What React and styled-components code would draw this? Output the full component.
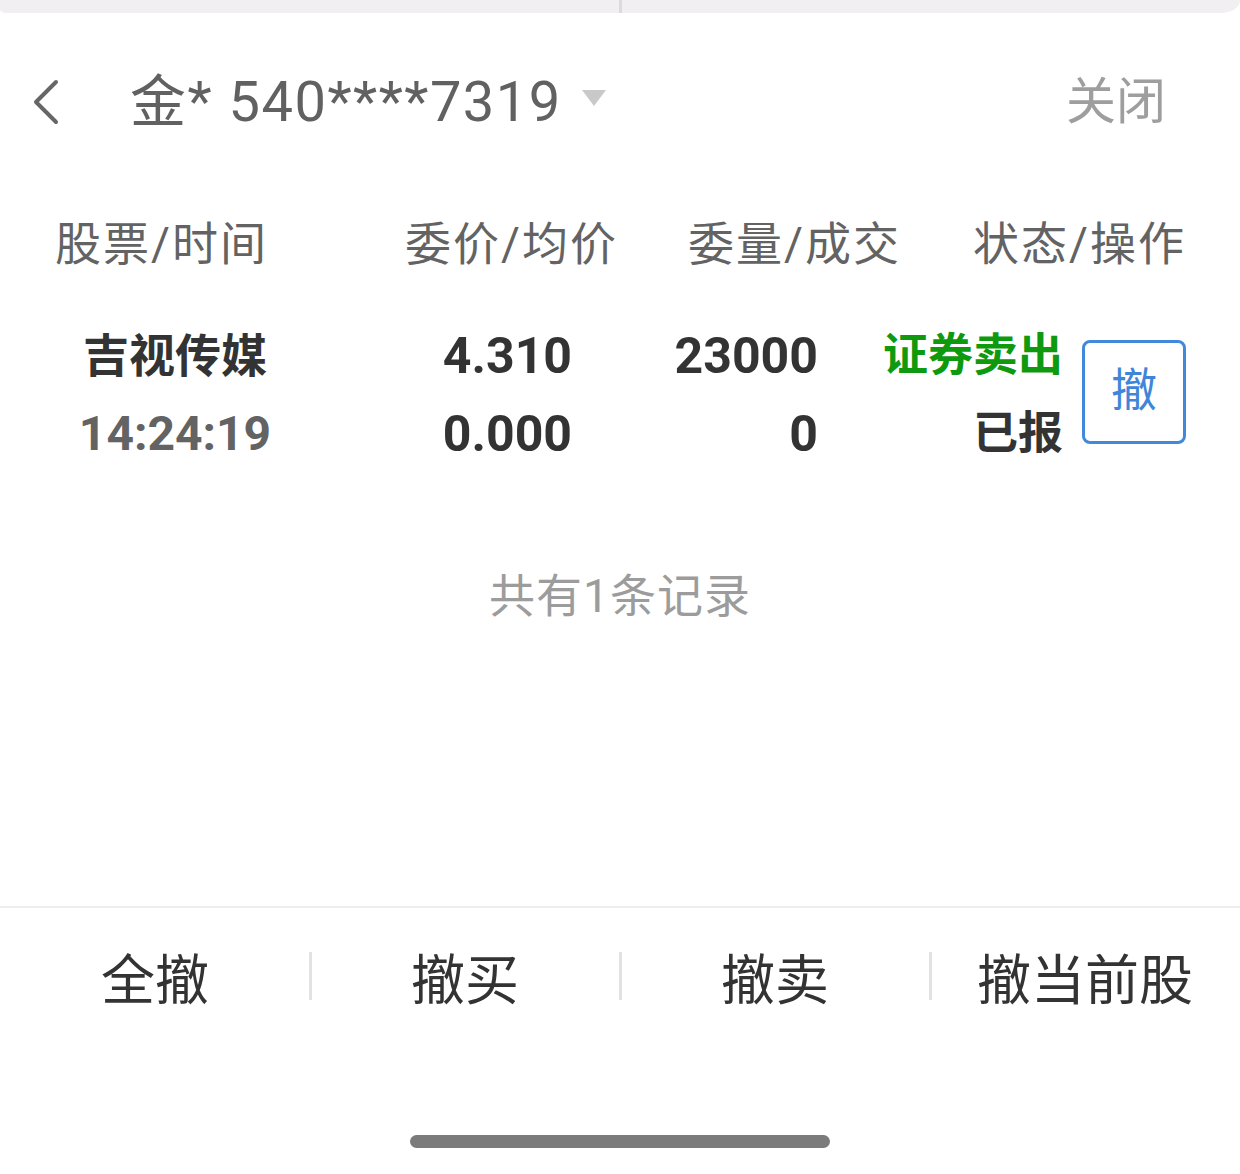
import React from "react";
import styled, { createGlobalStyle } from "styled-components";

const GlobalStyle = createGlobalStyle`
  html, body {
    margin: 0;
    padding: 0;
    background: #ffffff;
  }
  body {
    font-family: Roboto, "Noto Sans CJK SC", sans-serif;
  }
`;

const FONT = `Roboto, "Noto Sans CJK SC", sans-serif`;

const StyledPage = styled.div`
  width: 1240px;
  height: 1174px;
  display: flex;
  flex-direction: column;
  background: #ffffff;
  overflow: hidden;
  font-family: ${FONT};
`;

const StyledTopStrip = styled.div`
  height: 13px;
  flex-shrink: 0;
  display: flex;
  background: #f1eff1;
  border-bottom-right-radius: 20px 12px;
  border-bottom-left-radius: 6px 4px;
`;

const StyledStripHalf = styled.div`
  flex: 1;
`;

const StyledStripDivider = styled.div`
  width: 3px;
  background: #dcdadc;
`;

const StyledHeader = styled.div`
  height: 178px;
  flex-shrink: 0;
  display: flex;
  align-items: center;
  padding: 0 74px 0 32px;
`;

const StyledBack = styled.svg`
  width: 28px;
  height: 46px;
  margin-right: 70px;
  flex-shrink: 0;
`;

const StyledTitle = styled.span`
  color: #616161;
  font-size: 56px;
  font-weight: 400;
  line-height: 60px;
  letter-spacing: 1.5px;
`;

const StyledCaret = styled.svg`
  width: 24px;
  height: 16px;
  margin-left: 20px;
  margin-top: -8px;
`;

const StyledClose = styled.span`
  margin-left: auto;
  color: #9e9e9e;
  font-size: 50px;
  line-height: 60px;
`;

const StyledColumnHeader = styled.div`
  height: 106px;
  flex-shrink: 0;
  display: grid;
  grid-template-columns: 350px 283px 285px 1fr;
  align-items: center;
  padding-left: 55px;
`;

const StyledHeadCell = styled.span`
  color: #636363;
  font-size: 46px;
  line-height: 56px;
  letter-spacing: 2px;
  white-space: nowrap;
`;

const StyledOrderRow = styled.div`
  margin-top: 20px;
  display: grid;
  grid-template-columns: 350px 222px 246px 245px 1fr;
  grid-template-rows: 78px 78px;
  align-items: center;
  padding-right: 54px;
`;

const StyledCell = styled.span`
  text-align: ${(p) => p.$align || "right"};
  color: ${(p) => p.$color || "#333333"};
  font-size: ${(p) => p.$size || 50}px;
  font-weight: 700;
  line-height: 60px;
  white-space: nowrap;
`;

const StyledCancelButton = styled.button`
  grid-column: 5;
  grid-row: 1 / span 2;
  justify-self: end;
  align-self: center;
  margin: 0 0 6px 0;
  width: 104px;
  height: 104px;
  box-sizing: border-box;
  border: 3px solid #4389db;
  border-radius: 8px;
  background: #ffffff;
  color: #3f85d9;
  font-family: ${FONT};
  font-size: 46px;
  line-height: 1;
  padding: 0 0 4px;
  display: flex;
  align-items: center;
  justify-content: center;
`;

const StyledSummary = styled.div`
  margin-top: 83px;
  text-align: center;
  color: #9c9c9c;
  font-size: 46px;
  line-height: 80px;
  letter-spacing: 1px;
`;

const StyledSpacer = styled.div`
  flex: 1;
`;

const StyledDivider = styled.div`
  height: 2px;
  flex-shrink: 0;
  background: #eeeeee;
`;

const StyledBottomBar = styled.div`
  height: 144px;
  flex-shrink: 0;
  display: grid;
  grid-template-columns: repeat(4, 1fr);
  align-items: center;
`;

const StyledAction = styled.span`
  position: relative;
  text-align: center;
  color: #333333;
  font-size: 54px;
  line-height: 64px;
  padding-top: 4px;
  white-space: nowrap;

  &:not(:first-child)::before {
    content: "";
    position: absolute;
    left: -1px;
    top: 6px;
    width: 3px;
    height: 48px;
    background: #e2e2e2;
  }
`;

const StyledHomeArea = styled.div`
  height: 122px;
  flex-shrink: 0;
  display: flex;
  justify-content: center;
  align-items: flex-end;
  padding-bottom: 26px;
  box-sizing: border-box;
`;

const StyledHomeIndicator = styled.div`
  width: 420px;
  height: 13px;
  border-radius: 7px;
  background: #7b7b7b;
`;

const headers = ["股票/时间", "委价/均价", "委量/成交", "状态/操作"];
const actions = ["全撤", "撤买", "撤卖", "撤当前股"];

export default function App() {
  return (
    <>
      <GlobalStyle />
      <StyledPage>
        <StyledTopStrip>
          <StyledStripHalf />
          <StyledStripDivider />
          <StyledStripHalf />
        </StyledTopStrip>

        <StyledHeader>
          <StyledBack viewBox="0 0 28 46">
            <path
              d="M24 3 L4 23 L24 43"
              fill="none"
              stroke="#666666"
              strokeWidth="4"
              strokeLinecap="round"
              strokeLinejoin="round"
            />
          </StyledBack>
          <StyledTitle>金* 540****7319</StyledTitle>
          <StyledCaret viewBox="0 0 24 16">
            <path d="M0 0 H24 L12 16 Z" fill="#c9c9c9" />
          </StyledCaret>
          <StyledClose>关闭</StyledClose>
        </StyledHeader>

        <StyledColumnHeader>
          {headers.map((h) => (
            <StyledHeadCell key={h}>{h}</StyledHeadCell>
          ))}
        </StyledColumnHeader>

        <StyledOrderRow>
          <StyledCell $align="center" $size={46}>吉视传媒</StyledCell>
          <StyledCell>4.310</StyledCell>
          <StyledCell>23000</StyledCell>
          <StyledCell $color="#0f990f" $size={45}>证券卖出</StyledCell>
          <StyledCancelButton>撤</StyledCancelButton>
          <StyledCell $align="center" $color="#636363" $size={48}>14:24:19</StyledCell>
          <StyledCell>0.000</StyledCell>
          <StyledCell>0</StyledCell>
          <StyledCell $size={45}>已报</StyledCell>
        </StyledOrderRow>

        <StyledSummary>共有1条记录</StyledSummary>

        <StyledSpacer />
        <StyledDivider />

        <StyledBottomBar>
          {actions.map((a) => (
            <StyledAction key={a}>{a}</StyledAction>
          ))}
        </StyledBottomBar>

        <StyledHomeArea>
          <StyledHomeIndicator />
        </StyledHomeArea>
      </StyledPage>
    </>
  );
}
